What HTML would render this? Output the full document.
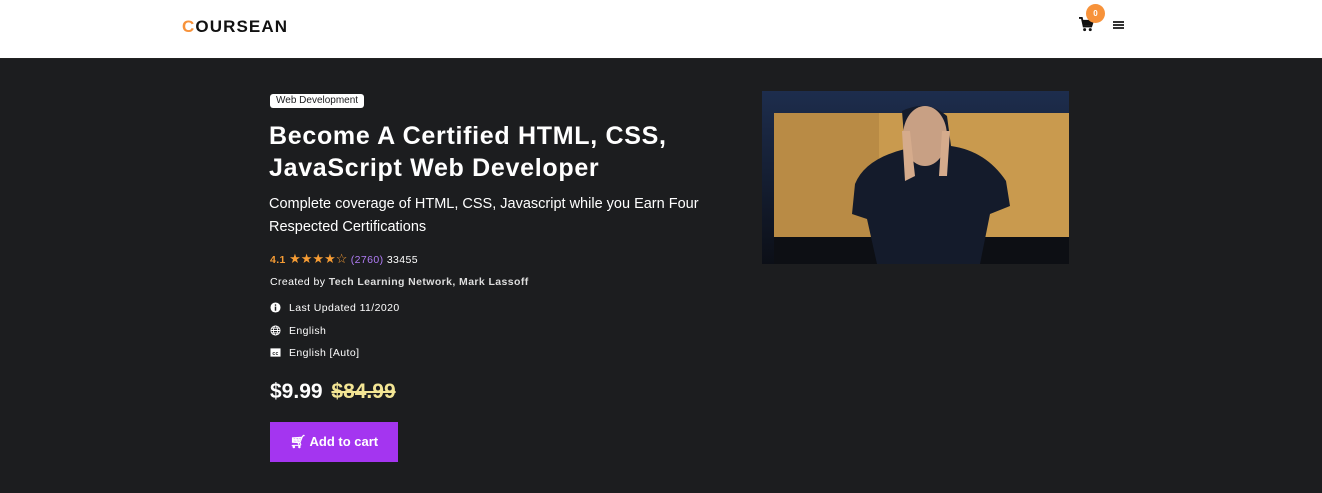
<!DOCTYPE html>
<html><head><meta charset="utf-8"><style>
*{margin:0;padding:0;box-sizing:border-box}
body{width:1322px;height:493px;overflow:hidden;background:#1c1d1f;font-family:"Liberation Sans",sans-serif;color:#fff;position:relative}
.hdr{position:absolute;left:0;top:0;width:1322px;height:59px;background:#fff;border-bottom:1px solid #222}
.logo{position:absolute;left:182px;top:17px;font-weight:bold;font-size:17px;letter-spacing:1.1px;color:#111}
.logo span{color:#f7923a}
.abs{position:absolute;white-space:nowrap}
.tag{left:270px;top:94px;background:#fff;color:#1c1d1f;font-size:10px;padding:1px 6px;border-radius:3px;height:14px;line-height:12px}
h1{position:absolute;left:269px;top:120px;font-size:25px;letter-spacing:0.7px;line-height:32px;font-weight:bold;width:470px}
.sub{left:269px;top:193px;font-size:14.5px;line-height:23px;white-space:normal;width:460px}
.s{font-size:10.5px;letter-spacing:0.4px}
.ic{display:inline-block;width:11px;height:11px;vertical-align:-2px;margin-right:8px}
.btn{left:270px;top:422px;width:128px;height:40px;background:#a435f0;font-weight:bold;font-size:13px;line-height:40px;text-align:center}
</style></head><body>
<div class="hdr">
<div class="logo"><span>C</span>OURSEAN</div>
<svg class="abs" style="left:1079px;top:17px" width="15" height="15" viewBox="0 0 16 16"><path d="M0 1h3l2 9h8l2-6H4" fill="none" stroke="#111" stroke-width="2"/><rect x="4" y="4" width="10" height="5" fill="#111"/><circle cx="6" cy="13.5" r="1.6" fill="#111"/><circle cx="12" cy="13.5" r="1.6" fill="#111"/></svg>
<div class="abs" style="left:1086px;top:4px;width:19px;height:19px;border-radius:50%;background:#f7923a;color:#fff;font-size:8px;font-weight:bold;text-align:center;line-height:19px">0</div>
<div class="abs" style="left:1113px;top:21px;width:11px;height:8px;border-top:2px solid #333;border-bottom:2px solid #333"><div style="height:2px;background:#333;margin-top:1px"></div></div>
</div>
<div class="abs tag">Web Development</div>
<h1>Become A Certified HTML, CSS, JavaScript Web Developer</h1>
<div class="abs sub">Complete coverage of HTML, CSS, Javascript while you Earn Four Respected Certifications</div>
<div class="abs s" style="left:270px;top:251px"><b style="color:#f69c34">4.1</b> <span style="color:#f69c34;font-size:13px;letter-spacing:0">★★★★☆</span> <span style="color:#b07cf5">(2760)</span> 33455</div>
<div class="abs s" style="left:270px;top:276px">Created by <b style="color:#ddd">Tech Learning Network, Mark Lassoff</b></div>
<div class="abs s" style="left:270px;top:302px"><svg class="ic" viewBox="0 0 12 12"><circle cx="6" cy="6" r="5.5" fill="#fff"/><rect x="5.2" y="5" width="1.6" height="4.5" fill="#1c1d1f"/><circle cx="6" cy="3.3" r="0.9" fill="#1c1d1f"/></svg>Last Updated 11/2020</div>
<div class="abs s" style="left:270px;top:325px"><svg class="ic" viewBox="0 0 12 12" fill="none" stroke="#fff" stroke-width="1"><circle cx="6" cy="6" r="5"/><ellipse cx="6" cy="6" rx="2.2" ry="5"/><path d="M1 6h10M2 3.5h8M2 8.5h8"/></svg>English</div>
<div class="abs s" style="left:270px;top:347px"><svg class="ic" viewBox="0 0 12 12"><rect x="0.5" y="1.5" width="11" height="9" fill="#fff"/><text x="6" y="8.5" font-size="5.5" font-weight="bold" text-anchor="middle" fill="#1c1d1f" font-family="Liberation Sans">cc</text></svg>English [Auto]</div>
<div class="abs" style="left:270px;top:380px;font-size:21px;font-weight:bold">$9.99 <span style="color:#f3e594;text-decoration:line-through;margin-left:3px">$84.99</span></div>
<div class="abs btn">🛒︎ Add to cart</div>
<svg class="abs" style="left:762px;top:91px" width="307" height="173" viewBox="0 0 307 173">
<defs><linearGradient id="g" x1="0" y1="0" x2="0" y2="1"><stop offset="0" stop-color="#1d2d4d"/><stop offset="1" stop-color="#0c0f17"/></linearGradient></defs>
<rect width="307" height="173" fill="url(#g)"/>
<rect x="12" y="22" width="295" height="124" fill="#c99a4e"/>
<rect x="12" y="22" width="105" height="124" fill="#b98b45"/>
<rect x="12" y="146" width="295" height="27" fill="#0d0f14"/>
<path d="M140 20q25-12 45 5l4 30 q35 5 55 35l4 25-20 8-10 50H115l-10-45-15-5 3-30q10-25 50-35z" fill="#141b2b"/>
<ellipse cx="163" cy="45" rx="22" ry="30" fill="#c8a084"/>
<path d="M140 40l8 0 5 45-10 5zM180 40l8 0-3 45-8 0z" fill="#d5ab8c"/>
</svg>
</body></html>
